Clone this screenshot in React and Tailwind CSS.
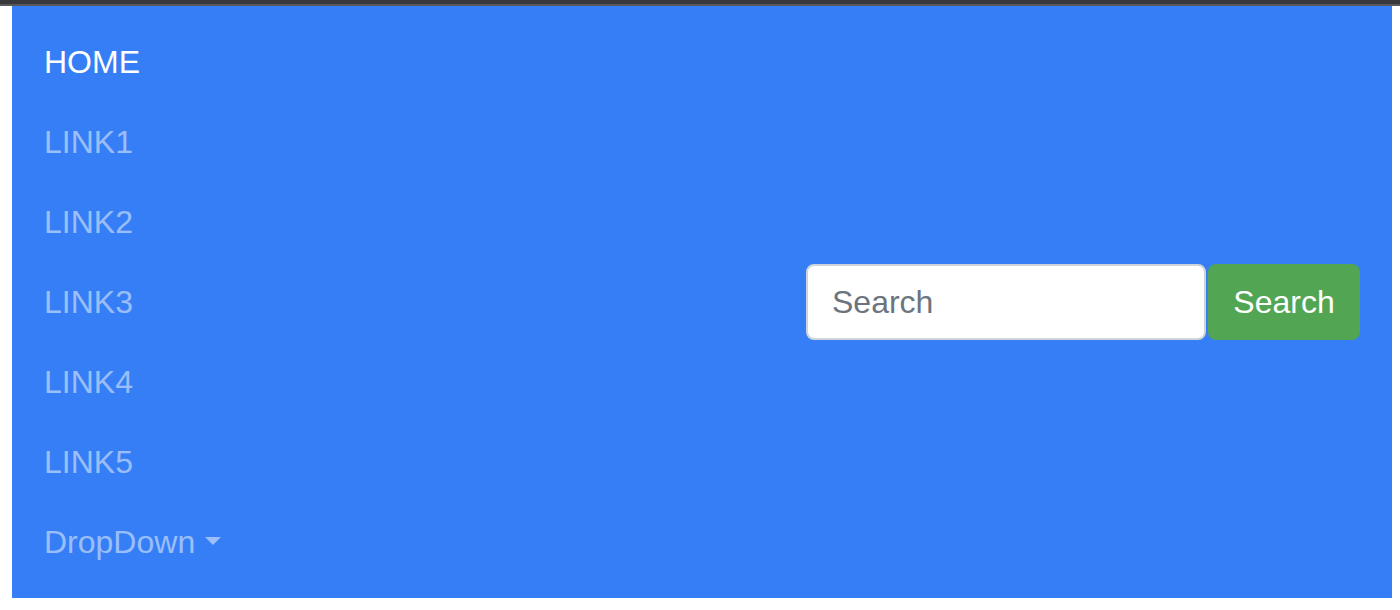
import React from "react";

const LINKS = ["LINK1", "LINK2", "LINK3", "LINK4", "LINK5"];

export default function App() {
  return (
    <div className="h-[610px] w-[1400px] bg-white" style={{ fontFamily: '"Liberation Sans", Arial, sans-serif' }}>
      <div className="h-[4px] bg-[#38383a]" />
      <div className="h-[2px] bg-[#59595b]" />
      <div className="pl-[12px] pr-[8px]">
        <nav className="flex h-[592px] items-center justify-between bg-[#357ef5] px-[32px] py-[16px]">
          <ul className="flex flex-col self-stretch text-[32px] leading-[48px]">
            <li className="py-[16px] text-white">HOME</li>
            {LINKS.map((l) => (
              <li key={l} className="py-[16px] text-white/50">{l}</li>
            ))}
            <li className="flex items-center py-[16px] text-white/50">
              DropDown
              <span className="ml-[10px] mt-[-2px] h-0 w-0 border-x-[8px] border-t-[8px] border-x-transparent border-t-white/50" />
            </li>
          </ul>
          <form className="flex items-center gap-[2px]" onSubmit={(e) => e.preventDefault()}>
            <input
              type="text"
              placeholder="Search"
              className="h-[76px] w-[400px] rounded-[8px] border-2 border-[#ced4da] bg-white px-[24px] text-[32px] text-[#495057] outline-none placeholder:text-[#6c757d]"
            />
            <button
              type="submit"
              className="h-[76px] w-[152px] rounded-[8px] bg-[#52a552] text-[32px] text-white"
            >
              Search
            </button>
          </form>
        </nav>
      </div>
    </div>
  );
}
